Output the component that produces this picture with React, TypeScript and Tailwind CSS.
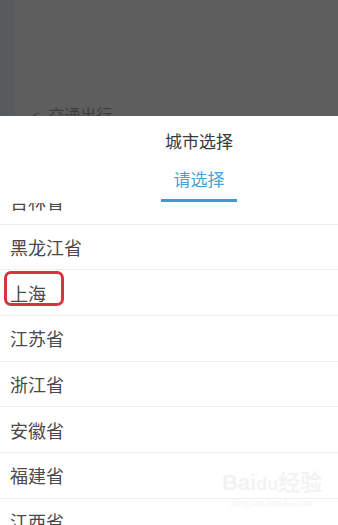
import React from 'react';

const provinces = ['吉林省', '黑龙江省', '上海', '江苏省', '浙江省', '安徽省', '福建省', '江西省', '山东省'];

const App: React.FC = () => {
  return (
    <div
      className="relative w-[338px] h-[525px] overflow-hidden bg-white flex flex-col"
      style={{ fontFamily: '"Noto Sans CJK SC", "Noto Sans", sans-serif' }}
    >
      {/* dimmed page behind the sheet */}
      <div className="h-[116px] shrink-0 flex bg-[#5e5e5e] overflow-hidden">
        <div className="w-[15px] bg-[#585b5e]" />
        <div className="flex items-end pl-[18px] pb-0">
          <span className="text-[#3e3e3e] text-[13px] mr-[8px] translate-y-[8px]">&lt;</span>
          <span className="text-[#3e3e3e] text-[16px] leading-none translate-y-[6px]">交通出行</span>
        </div>
      </div>

      {/* bottom sheet */}
      <div className="flex-1 flex flex-col bg-white min-h-0">
        <div className="ml-[161px] w-[76px] flex flex-col items-center pt-[13px]">
          <div className="text-[17px] leading-[24px] text-[#3a3a3a] whitespace-nowrap">城市选择</div>
          <div className="text-[17px] leading-[24px] text-[#4aa3d8] mt-[14px] whitespace-nowrap">请选择</div>
          <div className="w-full h-[3px] bg-[#3d9bd3] mt-[8px]" />
        </div>

        <div className="flex-1 overflow-hidden mt-[1px]">
          <div className="-mt-[24px]">
            {provinces.map((p) => (
              <div
                key={p}
                className="relative h-[45.7px] flex items-center pl-[10px] border-b border-[#efefef] text-[18px] text-[#4a4a4a]"
              >
                <span className="leading-none">{p}</span>
                {p === '上海' && (
                  <div className="absolute left-[4px] top-[1px] w-[60px] h-[35px] border-[3px] border-[#d8333f] rounded-[7px]" />
                )}
              </div>
            ))}
          </div>
        </div>
      </div>

      {/* watermark */}
      <div className="absolute left-[222px] top-[472px] flex flex-col items-center pointer-events-none">
        <div className="text-[22px] leading-none text-[#f3f3f3] font-bold" style={{ fontFamily: '"Liberation Sans", "Noto Sans CJK SC", sans-serif' }}>
          Bai<span className="text-[18px]">du</span>经验
        </div>
        <div className="text-[11px] italic text-[#f3f3f3]" style={{ fontFamily: '"Liberation Serif", serif' }}>
          jingyan.baidu.com
        </div>
      </div>
    </div>
  );
};

export default App;
